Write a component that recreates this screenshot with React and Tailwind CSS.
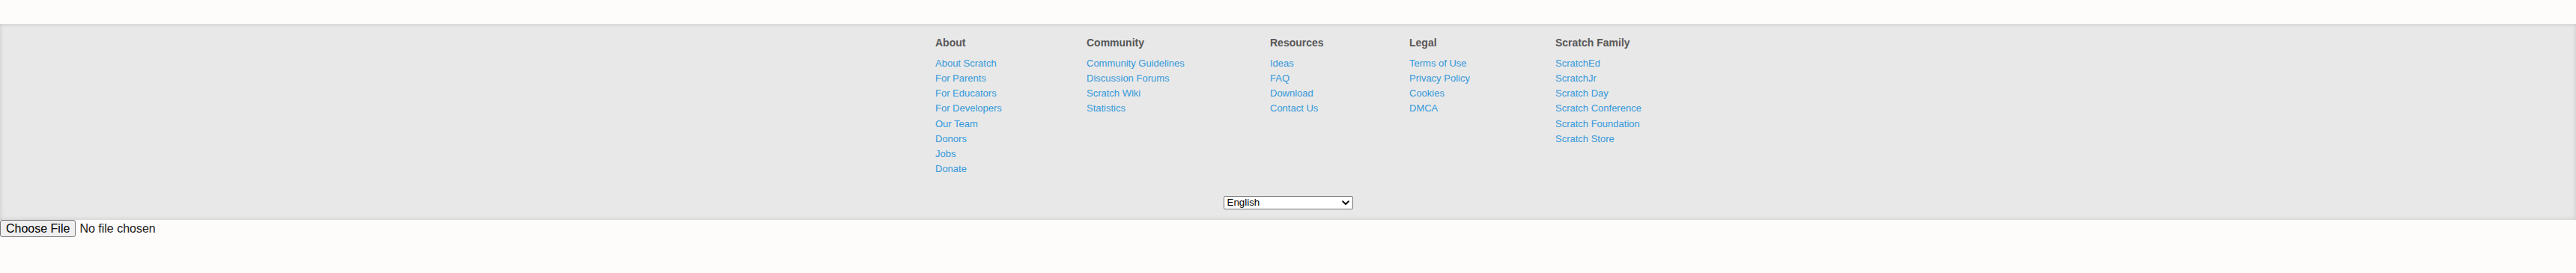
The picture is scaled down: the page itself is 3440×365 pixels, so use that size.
import React from "react";

const columns = [
  {
    title: "About",
    width: "w-[202px]",
    links: [
      "About Scratch",
      "For Parents",
      "For Educators",
      "For Developers",
      "Our Team",
      "Donors",
      "Jobs",
      "Donate",
    ],
  },
  {
    title: "Community",
    width: "w-[245px]",
    links: [
      "Community Guidelines",
      "Discussion Forums",
      "Scratch Wiki",
      "Statistics",
    ],
  },
  {
    title: "Resources",
    width: "w-[186px]",
    links: ["Ideas", "FAQ", "Download", "Contact Us"],
  },
  {
    title: "Legal",
    width: "w-[195px]",
    links: ["Terms of Use", "Privacy Policy", "Cookies", "DMCA"],
  },
  {
    title: "Scratch Family",
    width: "flex-1",
    links: [
      "ScratchEd",
      "ScratchJr",
      "Scratch Day",
      "Scratch Conference",
      "Scratch Foundation",
      "Scratch Store",
    ],
  },
];

const App = () => {
  return (
    <div className="min-h-[365px] bg-[#fdfcfa] font-['Liberation_Sans',Arial,sans-serif]">
      {/* Top strip */}
      <div className="h-[32px]" />

      {/* Footer */}
      <footer className="h-[262px] bg-[#e8e8e8] shadow-[inset_0_0_6px_rgba(0,0,0,0.14)] pt-[15px]">
        <div className="w-[960px] mx-auto pl-[9px] flex">
          {columns.map((col) => (
            <dl key={col.title} className={`${col.width} shrink-0`}>
              <dt className="text-[14px] leading-[20px] font-bold text-[#575757]">
                {col.title}
              </dt>
              <div className="mt-[8px]">
                {col.links.map((link) => (
                  <dd
                    key={link}
                    className="text-[13px] leading-[20.15px] text-[#3498db] whitespace-nowrap"
                  >
                    <a href="#">{link}</a>
                  </dd>
                ))}
              </div>
            </dl>
          ))}
        </div>

        {/* Language select */}
        <div className="flex justify-center mt-[26px]">
          <div className="relative h-[18px]">
            <select className="block appearance-none w-[173px] h-[18px] bg-white border border-[#767676] rounded-[2px] pl-[4px] text-[13.33px] leading-[16px] text-black">
              <option>English</option>
            </select>
            <svg
              className="absolute right-[5px] top-[6px] pointer-events-none"
              width="10"
              height="7"
              viewBox="0 0 10 7"
              fill="none"
            >
              <path
                d="M1.2 1.2 L5 5 L8.8 1.2"
                stroke="#111"
                strokeWidth="2"
                strokeLinecap="round"
                strokeLinejoin="round"
              />
            </svg>
          </div>
        </div>
      </footer>

      {/* File input */}
      <div className="h-[23px] flex items-center">
        <input
          type="file"
          className="text-[16px] leading-[21px] text-[#1a1a1a] file:h-[23px] file:px-[7px] file:border file:border-[#767676] file:rounded-[3px] file:bg-[#efefef] file:text-black file:mr-[5px]"
        />
      </div>
    </div>
  );
};

export default App;
